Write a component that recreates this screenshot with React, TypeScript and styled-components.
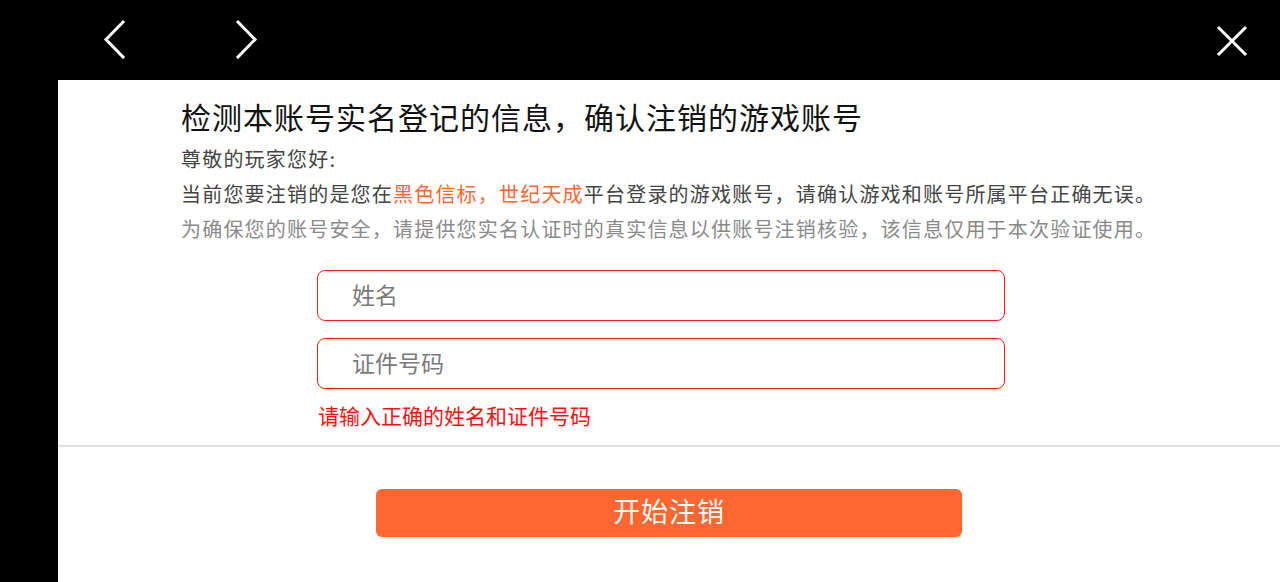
import React from "react";
import styled, { createGlobalStyle } from "styled-components";

const Global = createGlobalStyle`
  html, body { margin: 0; padding: 0; background: #000; }
  body { font-family: "Noto Sans CJK SC", "Noto Sans", sans-serif; }
  * { box-sizing: border-box; }
`;

const Page = styled.div`
  width: 1280px;
  height: 582px;
  background: #000;
  display: flex;
  flex-direction: column;
  overflow: hidden;
`;

const TopBar = styled.div`
  height: 80px;
  flex: none;
  display: flex;
  align-items: center;
  padding: 0 32px 0 103px;
`;

const NavButton = styled.button<{ $gap?: number }>`
  background: none;
  border: none;
  padding: 0;
  width: 24px;
  height: 40px;
  margin-right: ${(p) => p.$gap ?? 0}px;
  display: flex;
  align-items: center;
  justify-content: center;
  color: #fff;
  margin-top: -2px;
`;

const Spacer = styled.div`
  flex: 1;
`;

const CloseButton = styled.button`
  background: none;
  border: none;
  padding: 0;
  width: 32px;
  height: 32px;
  display: flex;
  align-items: center;
  justify-content: center;
  margin-top: 1px;
`;

const Body = styled.div`
  flex: 1;
  display: flex;
`;

const Gutter = styled.div`
  width: 58px;
  flex: none;
  background: #000;
`;

const Panel = styled.div`
  flex: 1;
  background: #fff;
  display: flex;
  flex-direction: column;
`;

const Info = styled.div`
  padding: 16px 0 0 123px;
`;

const Title = styled.h1`
  margin: 0;
  font-size: 30px;
  line-height: 40px;
  font-weight: 400;
  color: #111;
  letter-spacing: 1px;
`;

const Line = styled.p<{ $tone?: "dark" | "light" }>`
  margin: 0;
  font-size: 20px;
  line-height: 35px;
  color: ${(p) => (p.$tone === "light" ? "#8a8a8a" : "#444")};
  letter-spacing: 1.2px;
  white-space: nowrap;
`;

const Lines = styled.div`
  margin-top: 5px;
`;

const Highlight = styled.span`
  color: #ff6630;
`;

const Form = styled.div`
  padding: 24px 0 0 259px;
  display: flex;
  flex-direction: column;
  gap: 17px;
`;

const Field = styled.input`
  width: 688px;
  height: 51px;
  border: 1.5px solid #ff1a1a;
  border-radius: 8px;
  padding: 0 0 3px 34px;
  font-family: inherit;
  font-size: 23px;
  color: #333;
  outline: none;
  background: #fff;
  &::placeholder {
    color: #7a7a7a;
  }
`;

const ErrorText = styled.div`
  margin-top: -6px;
  font-size: 21px;
  line-height: 30px;
  color: #ff1010;
  padding-left: 1px;
`;

const Divider = styled.div`
  margin-top: 15px;
  height: 2px;
  background: #e0e0e0;
`;

const Footer = styled.div`
  display: flex;
  justify-content: center;
  padding-top: 42px;
`;

const Submit = styled.button`
  width: 586px;
  height: 48px;
  border: none;
  border-radius: 6px;
  background: #ff6630;
  color: #fff;
  font-family: inherit;
  font-size: 27px;
  letter-spacing: 1px;
  line-height: 44px;
  padding: 0 0 4px;
`;

const Chevron = ({ dir }: { dir: "left" | "right" }) => (
  <svg width="24" height="40" viewBox="0 0 24 40" fill="none">
    <polyline
      points={dir === "left" ? "20,3 3,20.5 20,38" : "4,3 21,20.5 4,38"}
      stroke="#fff"
      strokeWidth="3"
      strokeLinecap="square"
    />
  </svg>
);

const CloseIcon = () => (
  <svg width="32" height="32" viewBox="0 0 32 32" fill="none">
    <path d="M2 2 L30 30 M30 2 L2 30" stroke="#fff" strokeWidth="3" />
  </svg>
);

export default function App() {
  return (
    <>
      <Global />
      <Page>
        <TopBar>
          <NavButton $gap={107} aria-label="back">
            <Chevron dir="left" />
          </NavButton>
          <NavButton aria-label="forward">
            <Chevron dir="right" />
          </NavButton>
          <Spacer />
          <CloseButton aria-label="close">
            <CloseIcon />
          </CloseButton>
        </TopBar>
        <Body>
          <Gutter />
          <Panel>
            <Info>
              <Title>检测本账号实名登记的信息，确认注销的游戏账号</Title>
              <Lines>
                <Line>尊敬的玩家您好:</Line>
                <Line>
                  当前您要注销的是您在<Highlight>黑色信标，世纪天成</Highlight>
                  平台登录的游戏账号，请确认游戏和账号所属平台正确无误。
                </Line>
                <Line $tone="light">
                  为确保您的账号安全，请提供您实名认证时的真实信息以供账号注销核验，该信息仅用于本次验证使用。
                </Line>
              </Lines>
            </Info>
            <Form>
              <Field placeholder="姓名" />
              <Field placeholder="证件号码" />
              <ErrorText>请输入正确的姓名和证件号码</ErrorText>
            </Form>
            <Divider />
            <Footer>
              <Submit>开始注销</Submit>
            </Footer>
          </Panel>
        </Body>
      </Page>
    </>
  );
}
